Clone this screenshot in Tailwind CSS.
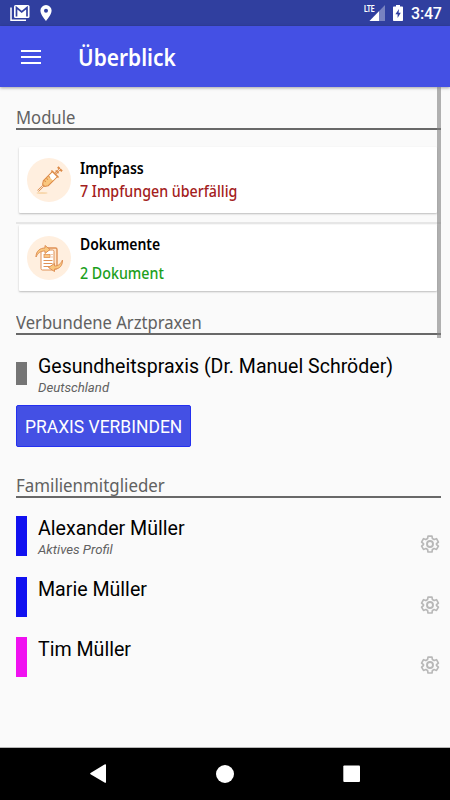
<!DOCTYPE html>
<html lang="de">
<head>
<meta charset="utf-8">
<title>Überblick</title>
<script src="https://cdn.jsdelivr.net/npm/@tailwindcss/browser@4"></script>
</head>
<body class="w-[450px] h-[800px] overflow-hidden bg-[#fafafa] font-['Roboto',sans-serif] text-black">
<svg class="hidden">
  <symbol id="gear" viewBox="0 0 24 24"><path fill="none" stroke="#b8b8b8" stroke-width="2" stroke-linejoin="round" d="M9.600 2.500h4.800l.5 3 2 1.200 2.900-1.100 2.300 4.100-2.300 1.900v1l2.300 1.900-2.300 4-2.900-1-2 1.100-.5 3H9.600l-.5-3-2-1.100-2.900 1-2.300-4 2.300-1.900v-1l-2.300-1.900 2.300-4.100 2.900 1.100 2-1.200z"/><circle cx="12" cy="12" r="3.600" fill="none" stroke="#b8b8b8" stroke-width="2.300"/></symbol>
</svg>
<div class="flex flex-col h-full">
  <div class="h-[26px] shrink-0 bg-[#303f9f] flex items-start text-white">
    <svg class="w-5 h-[18px] ml-[10px] mt-1" viewBox="0 0 20 18"><path d="M1 3.500V16.200H16" fill="none" stroke="#fff" stroke-width="1.500"/><rect x="4" y="1" width="15.500" height="13" rx="1.500" fill="#fff"/><path d="M6.500 12.500V3.500L11.700 8l5.300-4.500v9" fill="none" stroke="#303f9f" stroke-width="1.700"/></svg>
    <svg class="w-3 h-4 ml-[10px] mt-[5px]" viewBox="0 0 12 16"><path fill="#fff" fill-rule="evenodd" d="M6 0a5.600 5.600 0 0 0-5.600 5.600C.4 9.800 6 16 6 16s5.600-6.200 5.600-10.400A5.600 5.600 0 0 0 6 0zm0 3.700a2 2 0 1 1 0 4 2 2 0 0 1 0-4z"/></svg>
    <div class="relative ml-auto w-5 h-[17px] mt-[4px]">
      <svg class="w-5 h-[17px]" viewBox="0 0 20 17"><path d="M4.500 17L20 1v16z" fill="#7882c0"/><path d="M4.500 17L14 7.200V17z" fill="#fff"/></svg>
      <span class="absolute -left-px top-[1px] text-[9px] leading-[9px] font-bold tracking-[-0.300px] origin-left scale-x-[.75]">LTE</span>
    </div>
    <svg class="w-[10px] h-4 ml-2 mt-[5px]" viewBox="0 0 10 16"><path fill="#fff" d="M3 0h4v1.500h2.200q.8 0 .8.800v12.900q0 .8-.8.800H.8q-.8 0-.8-.8V2.300q0-.8.800-.8H3z"/><path d="M6 4L2.400 9.300h2.200V13L7.800 7.700H5.600z" fill="#303f9f"/></svg>
    <span class="w-[31px] ml-[8px] mr-[8px] mt-[4px] text-[16px] leading-5 font-medium tracking-[-0.200px] whitespace-nowrap">3:47</span>
  </div>
  <header class="relative z-10 h-[61px] shrink-0 bg-[#4450e4] shadow-[0_1px_3px_rgba(0,0,0,.35)] flex items-center text-white">
    <svg class="w-5 h-[14px] ml-[21px]" viewBox="0 0 20 14"><path d="M0 1h20M0 7h20M0 13h20" stroke="#fff" stroke-width="1.800"/></svg>
    <h1 class="ml-[37px] mt-[3px] font-['Noto_Sans',sans-serif] font-semibold text-[22.500px] leading-7 whitespace-nowrap origin-left scale-x-[.93]">Überblick</h1>
  </header>
  <main class="relative flex-1 pl-4 pr-[9px] border-b border-[#b5b5b5]">
    <div class="absolute z-10 right-[9px] top-0 w-1 h-[251px] bg-[#7f7f7f]/60"></div>
    <h2 class="h-[43px] pt-[18px] border-b-2 border-[#686868] text-[#616161] font-['Noto_Sans',sans-serif] text-[17.500px] leading-6"><span class="inline-block origin-left scale-x-[.95]">Module</span></h2>
    <section class="pt-[17px] pl-[3px] pr-1">
      <div class="h-[66px] bg-white rounded-[1px] shadow-[0_1px_2px_rgba(0,0,0,.25)] flex pl-2">
        <svg class="w-11 h-11 mt-[11px]" viewBox="0 0 44 44"><circle cx="22" cy="22" r="22" fill="#ffefdf"/><ellipse cx="15" cy="35" rx="5.500" ry="1" fill="#f8d8ae"/><g transform="translate(11 33) rotate(-45)" fill="none" stroke="#dc8a47" stroke-width="1"><path d="M0 0h8M25 0h7M31-3v6" stroke-width="2"/><path d="M0 0h8M25 0h7" stroke="#fff" stroke-width=".7"/><path d="M8-1.500L11-3.500h13v7H11L8 1.500z" fill="#f9c77f"/><path d="M18-3h6v6h-6z" fill="#fff" stroke="none"/><path d="M24-5v10M27-2v4" stroke-width="1.500"/><path d="M12-3v2M15-3v2M18-3v2"/></g></svg>
        <div class="ml-[9px] pt-[9px] font-['Noto_Sans',sans-serif] whitespace-nowrap">
          <div class="text-[15.500px] leading-6 font-semibold origin-left scale-x-[.91] w-max">Impfpass</div>
          <div class="text-[16px] leading-[22px] font-medium text-[#a32020] origin-left scale-x-[.89] w-max">7 Impfungen überfällig</div>
        </div>
      </div>
      <div class="h-[2px] mt-[9px] -ml-[3px] -mr-1 bg-[#e6e6e6]"></div>
      <div class="h-[66px] mt-px bg-white rounded-[1px] shadow-[0_1px_2px_rgba(0,0,0,.25)] flex pl-2">
        <svg class="w-11 h-11 mt-[11px]" viewBox="0 0 44 44"><circle cx="22" cy="22" r="22" fill="#ffefdf"/><g stroke="#df9156" stroke-width="1"><rect x="18" y="12" width="12" height="21" rx="1.500" fill="#ffe7ce" stroke-width="1.400"/><rect x="14" y="14" width="13" height="20" rx="1.500" fill="#fff"/><rect x="17" y="18.500" width="6" height="3" fill="#fbc783" stroke-width=".8"/><path d="M24.500 18.500h1M24.500 21h1M16.500 24.500h9M16.500 27.500h9M16.500 30.500h7"/><path fill="#f9c77f" d="M9 21c0-6 4-9 9-9v-2.500l5 4-5 4v-2.500c-5 0-7 2-9 6zM35.500 24c0 6-3 9-8 9v2.500l-6-4 6-4V30c4 0 6-2 8-6z"/></g></svg>
        <div class="ml-[9px] pt-[7px] font-['Noto_Sans',sans-serif] whitespace-nowrap">
          <div class="text-[15.500px] leading-6 font-semibold origin-left scale-x-[.9] w-max">Dokumente</div>
          <div class="mt-[5px] text-[16px] leading-6 font-medium text-[#1ca01c] origin-left scale-x-[.89] w-max">2 Dokument</div>
        </div>
      </div>
    </section>
    <h2 class="mt-[19px] h-[25px] border-b-2 border-[#686868] text-[#616161] font-['Noto_Sans',sans-serif] text-[17.500px] leading-6"><span class="inline-block origin-left scale-x-[.95]">Verbundene Arztpraxen</span></h2>
    <div class="h-[70px] pt-[19px] flex">
      <div class="w-[11px] h-[23px] mt-[8px] bg-[#757575]"></div>
      <div class="ml-[11px] whitespace-nowrap">
        <div class="text-[20px] leading-6 origin-left scale-x-[.977] w-max">Gesundheitspraxis (Dr. Manuel Schröder)</div>
        <div class="text-[13.200px] leading-5 italic text-[#616161]">Deutschland</div>
      </div>
    </div>
    <button class="flex w-[175px] h-[42px] items-center pl-[8px] rounded-[2px] bg-[#4450e4] border border-[#2430f0] text-white text-[18px] whitespace-nowrap"><span class="origin-left scale-x-[.97]">PRAXIS VERBINDEN</span></button>
    <h2 class="mt-[26px] h-[25px] border-b-2 border-[#686868] text-[#616161] font-['Noto_Sans',sans-serif] text-[17.500px] leading-6"><span class="inline-block origin-left scale-x-[.965]">Familienmitglieder</span></h2>
    <ul class="pt-[18px]">
      <li class="h-[61px] flex">
        <div class="w-[11px] h-10 bg-[#1111f0]"></div>
        <div class="ml-[11px] whitespace-nowrap"><div class="text-[20px] leading-6 origin-left scale-x-[.98] w-max">Alexander Müller</div><div class="text-[13.200px] leading-5 italic text-[#616161]">Aktives Profil</div></div>
        <svg class="w-5 h-5 ml-auto mr-[1px] mt-[18px]"><use href="#gear"/></svg>
      </li>
      <li class="h-[60px] flex">
        <div class="w-[11px] h-10 bg-[#1111f0]"></div>
        <div class="ml-[11px] text-[20px] leading-6 origin-left scale-x-[.98]">Marie Müller</div>
        <svg class="w-5 h-5 ml-auto mr-[1px] mt-[18px]"><use href="#gear"/></svg>
      </li>
      <li class="h-[60px] flex">
        <div class="w-[11px] h-10 bg-[#f011f0]"></div>
        <div class="ml-[11px] text-[20px] leading-6 origin-left scale-x-[.98]">Tim Müller</div>
        <svg class="w-5 h-5 ml-auto mr-[1px] mt-[18px]"><use href="#gear"/></svg>
      </li>
    </ul>
  </main>
  <nav class="h-[52px] shrink-0 bg-black">
    <svg class="w-[450px] h-[52px]" viewBox="0 0 450 52" fill="#fff"><path d="M90.500 25l14-8.400q1.500-.8 1.500.5v17q0 1.300-1.500.5l-14-8.400q-.8-.6 0-1.200z"/><circle cx="225" cy="26" r="9"/><rect x="343.300" y="17.500" width="16.700" height="16.500" rx="1"/></svg>
  </nav>
</div>
</body>
</html>
